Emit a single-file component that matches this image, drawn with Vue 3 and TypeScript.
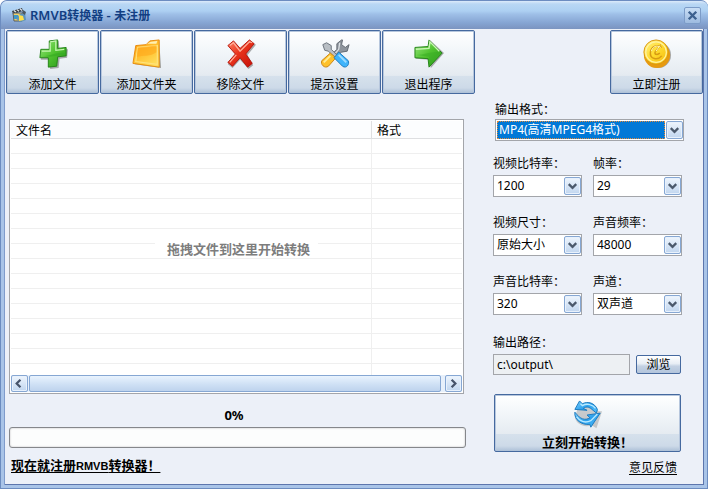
<script setup lang="ts">
import { ref } from 'vue'

type IconName = 'add' | 'folder' | 'remove' | 'tools' | 'exit'

interface Tool {
  icon: IconName
  label: string
}

interface Setting {
  id: string
  label: string
  value: string
  options: string[]
}

const tools: Tool[] = [
  { icon: 'add', label: '添加文件' },
  { icon: 'folder', label: '添加文件夹' },
  { icon: 'remove', label: '移除文件' },
  { icon: 'tools', label: '提示设置' },
  { icon: 'exit', label: '退出程序' },
]

const format = ref('MP4(高清MPEG4格式)')
const outputPath = ref('c:\\output\\')
const progress = ref(0)
const emptyRows = 15

const settings = ref<Setting[]>([
  { id: 'video-bitrate', label: '视频比特率：', value: '1200', options: ['1200'] },
  { id: 'frame-rate', label: '帧率：', value: '29', options: ['29'] },
  { id: 'video-size', label: '视频尺寸：', value: '原始大小', options: ['原始大小'] },
  { id: 'sample-rate', label: '声音频率：', value: '48000', options: ['48000'] },
  { id: 'audio-bitrate', label: '声音比特率：', value: '320', options: ['320'] },
  { id: 'channels', label: '声道：', value: '双声道', options: ['双声道'] },
])
</script>

<template>
  <div class="window">
    <svg class="defs" width="0" height="0" aria-hidden="true">
      <defs>
        <linearGradient id="green" x1="0" y1="0" x2="1" y2="1">
          <stop offset="0" stop-color="#9be880" />
          <stop offset="0.5" stop-color="#4fc22f" />
          <stop offset="1" stop-color="#2a961b" />
        </linearGradient>
        <linearGradient id="orange" x1="0" y1="0" x2="0.6" y2="1">
          <stop offset="0" stop-color="#ff9a12" />
          <stop offset="0.5" stop-color="#ffbd2c" />
          <stop offset="1" stop-color="#ffdc58" />
        </linearGradient>
        <linearGradient id="red" x1="0" y1="0" x2="1" y2="1">
          <stop offset="0" stop-color="#ff8468" />
          <stop offset="0.45" stop-color="#e8331c" />
          <stop offset="1" stop-color="#c40f08" />
        </linearGradient>
        <linearGradient id="blue" x1="0" y1="0" x2="1" y2="1">
          <stop offset="0" stop-color="#7fd3ff" />
          <stop offset="0.5" stop-color="#2b9fec" />
          <stop offset="1" stop-color="#55c1fb" />
        </linearGradient>
        <linearGradient id="gold" x1="0" y1="0" x2="1" y2="1">
          <stop offset="0" stop-color="#fff38a" />
          <stop offset="0.5" stop-color="#ffdb2e" />
          <stop offset="1" stop-color="#f3b50b" />
        </linearGradient>
      </defs>
    </svg>

    <header class="titlebar">
      <svg class="app-icon" viewBox="0 0 16 16" aria-hidden="true">
        <path d="M1 4l10-3 1 3-10 3z" fill="#3a4148" />
        <path d="M3 3.5l2 1.7M6 2.6l2 1.7M9 1.8l2 1.7" stroke="#e5e8ea" stroke-width="1.2" />
        <path d="M2 6h9v8H3z" fill="#efcf6b" stroke="#555c62" />
        <path d="M3 8h4v4H3z" fill="#3f9ac8" />
        <path d="M5 12l4-5 5-1 1 7-5 2z" fill="#5e94bb" />
        <path d="M8 8l4 1 1 4-5 1z" fill="#ffe04b" />
        <path d="M12 3l3 2-1 3-3-2z" fill="#4d5760" />
      </svg>
      <h1><span class="title-latin">RMVB</span>转换器<span class="title-latin"> - </span>未注册</h1>
      <button class="close" type="button" aria-label="关闭">
        <svg viewBox="0 0 16 16" aria-hidden="true">
          <path d="M4 4l8 8M12 4l-8 8" stroke="#3d618f" stroke-width="2.6" fill="none" />
        </svg>
      </button>
    </header>

    <div class="client">
      <nav class="toolbar">
        <button v-for="tool in tools" :key="tool.icon" class="tile" type="button">
          <svg class="icon" viewBox="0 0 32 32" aria-hidden="true">
            <template v-if="tool.icon === 'add'">
              <path d="M13 3l9-1 1 9 9 0-1 9-8 1-1 10-9 1-1-10-9 0 1-9 9-1z" fill="#777" opacity="0.6" />
              <path d="M12 2l9-1v9l9-1v9l-9 1-1 10-9 1V20H2l1-9h9z" fill="url(#green)" stroke="#238217" />
              <path d="M13 3l6-1v10l9-1M4 13h9V4" fill="none" stroke="#c6f5b1" stroke-width="1.3" />
              <path d="M4 18c9 1 15-5 25-3v2l-10 1-6 1z" fill="#35aa22" opacity="0.6" />
            </template>
            <template v-else-if="tool.icon === 'folder'">
              <path d="M5 8l10-1 4-4 10-1 2 29-28-4z" fill="#6f6a60" opacity="0.6" />
              <path d="M4 7l11-1 4-4 10-1v29L1 26z" fill="url(#orange)" stroke="#e88a0b" />
              <path d="M16 5l4-2 7-1-1 3z" fill="#fff0b4" />
              <path d="M6 9l21-2v20L4 24z" fill="none" stroke="#ffe17c" stroke-width="1.3" />
              <path d="M6 9l20-2v7c-7 5-14 3-21 5z" fill="#ffa91c" opacity="0.6" />
            </template>
            <template v-else-if="tool.icon === 'remove'">
              <path d="M3 8l6-5 7 8 9-9 7 4-9 11 6 11-5 4-9-10-8 9-5-4 8-11z" fill="#777" opacity="0.6" />
              <path d="M2 7l6-5 7 8 10-9 5 4-9 11 7 10-5 4-8-10-8 9-5-4 8-9z" fill="url(#red)" stroke="#b6150c" />
              <path d="M4 7l4-3 7 9 10-10 3 1M4 25l7-8" fill="none" stroke="#ffad98" stroke-width="1.4" />
            </template>
            <template v-else-if="tool.icon === 'tools'">
              <path d="M23 1l-5 4v6L7 22l3 4 13-12 6-1 2-7-4 3-4-3 1-5z" fill="#8d949c" stroke="#606870" />
              <path d="M21 4l-1 7-6 7" fill="none" stroke="#dce1e5" stroke-width="1.4" />
              <path d="M3 6l4-2 5 3v4l7 7-2 3-8-8-4-1z" fill="#b8bec4" stroke="#69717b" />
              <path d="M11 15l6 5-8 9c-4 3-9-2-7-6z" fill="#ffc12a" stroke="#c78318" />
              <path d="M11 18l-7 7" stroke="#ffec96" stroke-width="2" />
              <path d="M20 14l-5 6 9 9c4 3 8-2 6-6z" fill="#3fb4fb" stroke="#1c79bb" />
              <path d="M20 17l8 8" stroke="#9edcff" stroke-width="2" />
            </template>
            <template v-else>
              <path d="M2 10l14-1 1-8 15 14-14 16-2-9-14-1z" fill="#777" opacity="0.6" />
              <path d="M1 9l14-1 1-7 14 14-14 15-1-9-14-1z" fill="url(#green)" stroke="#238217" />
              <path d="M2 11l14-1 1-7 10 10" fill="none" stroke="#c6f5b1" stroke-width="1.5" />
              <path d="M3 17c8 0 14-4 25-3L17 27l-1-8z" fill="#37ac23" opacity="0.5" />
            </template>
          </svg>
          <span class="tile-label">{{ tool.label }}</span>
        </button>
        <button class="tile register" type="button">
          <svg class="icon" viewBox="0 0 32 32" aria-hidden="true">
            <circle cx="17" cy="17" r="14" fill="#777" opacity="0.6" />
            <circle cx="16" cy="17" r="14" fill="#e79a10" />
            <circle cx="15" cy="14" r="13" fill="url(#gold)" stroke="#d89310" />
            <circle cx="15" cy="14" r="11" fill="none" stroke="#fff3a0" stroke-width="1.3" />
            <path d="M21 9c-4-4-11-1-12 5-1 8 8 9 12 4M20 6l-6 8c-1 3 3 3 5 1" fill="none" stroke="#d79b12" stroke-width="1.6" />
            <path d="M20 9c-4-3-9-1-10 4M15 13l4-6" fill="none" stroke="#fff7b6" stroke-width="1" />
          </svg>
          <span class="tile-label">立即注册</span>
        </button>
      </nav>

      <main class="content">
        <section class="queue">
          <div class="list">
            <table>
              <colgroup>
                <col />
                <col class="type-col" />
              </colgroup>
              <thead>
                <tr>
                  <th scope="col">文件名</th>
                  <th scope="col">格式</th>
                </tr>
              </thead>
              <tbody>
                <tr v-for="row in emptyRows" :key="row">
                  <td></td>
                  <td></td>
                </tr>
                <tr class="partial">
                  <td></td>
                  <td></td>
                </tr>
              </tbody>
            </table>
            <p class="hint">拖拽文件到这里开始转换</p>
            <div class="scrollbar">
              <button type="button" aria-label="向左滚动">
                <svg viewBox="0 0 16 16" aria-hidden="true">
                  <path d="M9 4L5 8l4 4" fill="none" stroke="#46536a" stroke-width="2.4" />
                </svg>
              </button>
              <div class="thumb"></div>
              <button type="button" aria-label="向右滚动">
                <svg viewBox="0 0 16 16" aria-hidden="true">
                  <path d="M6 4l4 4-4 4" fill="none" stroke="#46536a" stroke-width="2.4" />
                </svg>
              </button>
            </div>
          </div>
          <div class="percent">{{ progress }}%</div>
          <div class="progress" role="progressbar" :aria-valuenow="progress" aria-valuemin="0" aria-valuemax="100">
            <div class="progress-fill" :style="{ width: progress + '%' }"></div>
          </div>
          <a class="register-link" href="#register">现在就注册<span class="latin">RMVB</span>转换器！</a>
        </section>

        <form class="options" @submit.prevent>
          <div class="field format">
            <label for="format">输出格式：</label>
            <div class="combo focused">
              <select id="format" v-model="format">
                <option>MP4(高清MPEG4格式)</option>
              </select>
              <span class="arrow" aria-hidden="true">
                <svg viewBox="0 0 16 16"><path d="M4 6l4 4 4-4" fill="none" stroke="#4b596c" stroke-width="2.4" /></svg>
              </span>
            </div>
          </div>

          <div class="pairs">
            <div v-for="s in settings" :key="s.id" class="field">
              <label :for="s.id">{{ s.label }}</label>
              <div class="combo">
                <select :id="s.id" v-model="s.value">
                  <option v-for="o in s.options" :key="o">{{ o }}</option>
                </select>
                <span class="arrow" aria-hidden="true">
                  <svg viewBox="0 0 16 16"><path d="M4 6l4 4 4-4" fill="none" stroke="#4b596c" stroke-width="2.4" /></svg>
                </span>
              </div>
            </div>
          </div>

          <div class="field path">
            <label for="path">输出路径：</label>
            <div class="path-row">
              <input id="path" v-model="outputPath" type="text" />
              <button class="browse" type="button">浏览</button>
            </div>
          </div>

          <button class="tile convert" type="submit">
            <svg class="icon" viewBox="0 0 32 32" aria-hidden="true">
              <path d="M4 12L6 2l4 3c7-3 14-1 17 7l4 0-6 18-5-3c-8 3-16-1-18-8z" fill="#777" opacity="0.35" />
              <path d="M2 10L7 1l3 3c6-3 13-1 16 6l-1 4-6-5c-3-2-5-2-8 0l4 2z" fill="url(#blue)" stroke="#1878bd" />
              <path d="M2 13c-1 8 7 14 16 13l1 3L29 14l-14 2 3 3c-5 3-10 2-16-6z" fill="url(#blue)" stroke="#1878bd" />
              <path d="M8 4l2 2c5-3 11-1 14 3M4 18c4 5 9 7 15 4l7-7" fill="none" stroke="#b8eaff" stroke-width="1.4" />
            </svg>
            <span class="tile-label">立刻开始转换！</span>
          </button>
          <a class="feedback" href="#feedback">意见反馈</a>
        </form>
      </main>
    </div>
  </div>
</template>

<style>
body {
  margin: 0;
  background: #fff;
}
</style>

<style scoped>
* {
  box-sizing: border-box;
}

.window {
  display: flex;
  flex-direction: column;
  min-height: 100vh;
  padding: 0 4px 4px;
  overflow: hidden;
  border: solid #6c8cc0;
  border-width: 1px 0 0 1px;
  border-radius: 7px 7px 0 0;
  background: #a9c4e8;
  box-shadow: inset 0 -1px #6c8cc0, inset -1px 0 #6c8cc0;
  color: #000;
  font: 12px/16px "Noto Sans", "Noto Sans CJK SC", sans-serif;
}

.defs {
  position: absolute;
}

.titlebar {
  display: flex;
  align-items: center;
  height: 28px;
  margin: 0 -4px;
  padding: 0 7px 0 10px;
  background: linear-gradient(#dceafa 0, #b9d7f4 3px, #add0f2 10px, #9fc0e8 13px, #85a4d2 22px, #7b94c0 100%);
}

.app-icon {
  width: 16px;
  height: 16px;
}

h1 {
  flex: 1;
  margin: 0 0 0 3px;
  color: #123f83;
  font-size: 12px;
  font-weight: 600;
}

.title-latin {
  font-size: 13px;
}

.close {
  width: 17px;
  height: 17px;
  padding: 0;
  border: 1px solid #7c9cc8;
  border-radius: 2px;
  background: linear-gradient(#c9def5, #9dbbe0);
}

.close svg,
.arrow svg,
.scrollbar svg {
  display: block;
  width: 100%;
  height: 100%;
}

.client {
  flex: 1;
  border: solid #5d76ad;
  border-width: 0 1px 1px 0;
  background: #ecf0f8;
  box-shadow: -1px 0 #7f9bcb;
}

.toolbar {
  display: flex;
  gap: 1px;
  padding: 1px 0 0 1px;
}

.tile {
  display: flex;
  flex-direction: column;
  align-items: center;
  justify-content: space-between;
  width: 93px;
  height: 64px;
  padding: 8px 1px 0;
  border: 1px solid #45699f;
  border-radius: 2px;
  background: linear-gradient(#fff, #f3f7fa 30%, #e5ebf1 70%, #bfcddf 97%, #8fa9ca);
  box-shadow: inset 0 0 0 1px #b7c7dd;
  color: #000;
  font: inherit;
}

.icon {
  width: 30px;
  height: 30px;
}

.tile-label {
  width: 100%;
  line-height: 17px;
  background: linear-gradient(#d6e1ec, #cddae8 70%, #adc0d7);
}

.register {
  margin-left: auto;
}

.content {
  display: grid;
  grid-template-columns: 1fr 191px;
  column-gap: 27px;
  padding: 6px 19px 0 4px;
}

.queue {
  display: flex;
  flex-direction: column;
  padding-top: 19px;
}

.list {
  position: relative;
  padding: 1px;
  margin-right: 2px;
  border: 1px solid #a3a5aa;
  background: #fff;
}

table {
  width: 100%;
  border-collapse: separate;
  border-spacing: 0;
  table-layout: fixed;
}

.type-col {
  width: 91px;
}

th {
  height: 18px;
  padding: 2px 5px 0;
  border-bottom: 1px solid #dedfe1;
  background: #fcfdfe;
  font-weight: 400;
  line-height: 15px;
  text-align: left;
}

th + th {
  border-left: 1px solid #dedfe1;
}

td {
  height: 15px;
  padding: 0;
  border-bottom: 1px solid #efefef;
}

td + td {
  border-left: 1px solid #efefef;
}

.partial td {
  height: 11px;
  border-bottom: 0;
}

.hint {
  position: absolute;
  top: 121px;
  left: 0;
  right: 0;
  width: fit-content;
  margin: 0 auto;
  padding: 0 8px 0 12px;
  background: #fff;
  color: #7d7d7d;
  font-size: 13px;
  font-weight: 700;
  white-space: nowrap;
}

.scrollbar {
  display: flex;
  gap: 1px;
  height: 17px;
  background: #e7f0fb;
}

.scrollbar button,
.arrow {
  width: 17px;
  padding: 0;
  border: 1px solid #86a7d3;
  border-radius: 2px;
  background: linear-gradient(#eef5fd, #c1d6ef);
  box-shadow: inset 0 0 0 1px #e8f1fc;
}

.thumb {
  flex: 1;
  margin-right: 3px;
  border: 1px solid #86a7d3;
  border-radius: 2px;
  background: linear-gradient(#e9f3fe, #cddff4 60%, #bed3ed);
}

.percent {
  margin-top: 13px;
  padding-right: 7px;
  font-size: 13px;
  font-weight: 700;
  text-align: center;
}

.progress {
  height: 21px;
  margin-top: 4px;
  border: 1px solid #85878b;
  border-radius: 3px;
  background: #fcfdfd;
  box-shadow: inset 0 0 2px #b7b8ba;
}

.progress-fill {
  height: 100%;
  background: #8db6e8;
}

.register-link,
.feedback {
  color: #000;
  text-decoration: underline;
  text-underline-offset: 2px;
}

.register-link {
  align-self: flex-start;
  margin: 9px 0 0 2px;
  font-size: 13px;
  font-weight: 700;
}

.latin {
  font-family: "Liberation Sans", sans-serif;
  font-size: 11px;
}

.options {
  display: flex;
  flex-direction: column;
  padding: 2px 2px 0 0;
}

.field {
  display: flex;
  flex-direction: column;
  gap: 3px;
  min-width: 0;
}

.format {
  gap: 1px;
  margin: 0 -2px 0 2px;
}

.pairs {
  display: grid;
  grid-template-columns: 1fr 1fr;
  gap: 18px 11px;
  margin: 15px 0 20px;
}

.combo {
  position: relative;
  display: grid;
  grid-template-columns: 1fr 17px;
  height: 22px;
  padding: 1px 0 1px 1px;
  border: 1px solid #a3a5aa;
  background: #fff;
}

.combo select {
  grid-area: 1 / 1 / 2 / 3;
  z-index: 1;
  width: 100%;
  min-width: 0;
  padding: 0 19px 0 2px;
  border: 0;
  outline: 0;
  appearance: none;
  background: transparent;
  color: inherit;
  font: inherit;
}

.arrow {
  grid-area: 1 / 2;
}

.focused::before {
  grid-area: 1 / 1;
  margin-right: 1px;
  border: 1px dotted #e08a3c;
  background: #0078d7;
  content: "";
}

.focused select {
  color: #fff;
}

.path-row {
  display: flex;
  align-items: center;
  gap: 6px;
  margin-right: 1px;
}

.path-row input {
  flex: 1;
  min-width: 0;
  height: 21px;
  padding: 0 3px;
  border: 1px solid #a3a5aa;
  border-radius: 0;
  background: #edf0f3;
  color: #000;
  font: inherit;
}

.browse {
  width: 45px;
  height: 19px;
  padding: 0;
  border: 1px solid #45699f;
  border-radius: 2px;
  background: linear-gradient(#fff, #e8eef5 45%, #c3d1e3 60%, #b3c5dc);
  color: #000;
  font: inherit;
  line-height: 17px;
}

.convert {
  width: auto;
  height: 58px;
  margin: 19px 1px 0;
  padding-top: 5px;
}

.convert .tile-label {
  font-size: 13px;
  font-weight: 700;
}

.feedback {
  align-self: flex-end;
  margin: 8px 5px 0 0;
}
</style>
